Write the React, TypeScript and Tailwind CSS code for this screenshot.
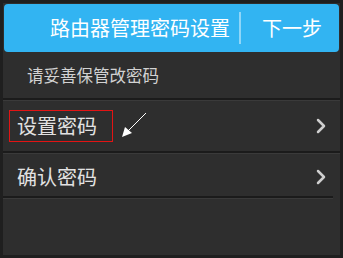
import { ChevronRight } from "lucide-react";

const font = { fontFamily: '"Noto Sans CJK SC", "Noto Sans", sans-serif' };

function Divider() {
  return (
    <div className="flex flex-col">
      <div className="h-[2px] bg-[#1b1b1b]" />
      <div className="h-px bg-[#3a3a3a]" />
    </div>
  );
}

function Row({ label, marked }: { label: string; marked?: boolean }) {
  return (
    <div className={`relative flex items-center justify-between ${marked ? "h-[50px]" : "h-[42px] pt-[3px]"}`}>
      {marked ? (
        <span className="ml-[6px] flex h-[32px] items-center border border-[#e31414] pl-[7px] pr-[15px] text-[20px] text-[#e2e2e2]">
          {label}
        </span>
      ) : (
        <span className="ml-[14px] text-[20px] text-[#e2e2e2]">{label}</span>
      )}
      {marked && (
        <svg className="absolute left-[116px] top-[11px]" width="30" height="28" viewBox="0 0 30 28">
          <line x1="27" y1="1" x2="8" y2="20" stroke="#fff" strokeWidth="1" />
          <polygon points="3,25 6,15 13,21" fill="#fff" />
        </svg>
      )}
      <ChevronRight className="mr-[7px] h-[24px] w-[24px] text-[#cfcfcf]" strokeWidth={2.5} />
    </div>
  );
}

export default function App() {
  return (
    <div
      className="flex h-[258px] w-[343px] flex-col border-[3px] border-[#1f1f1f] bg-[#2e2e2e]"
      style={font}
    >
      <div className="mx-px mt-px flex h-[48px] items-center rounded-[4px] bg-[#32b4f2] text-[20px] text-white">
        <span className="ml-[46px]">路由器管理密码设置</span>
        <div className="ml-[9px] h-[32px] w-[2px] bg-[#8fd6f8]" />
        <span className="ml-[21px]">下一步</span>
      </div>
      <div className="flex h-[46px] items-center pl-[24px] text-[16.5px] text-[#d2d2d2]">
        请妥善保管改密码
      </div>
      <Divider />
      <Row label="设置密码" marked />
      <Divider />
      <Row label="确认密码" />
      <div className="mr-[7px]">
        <Divider />
      </div>
    </div>
  );
}
